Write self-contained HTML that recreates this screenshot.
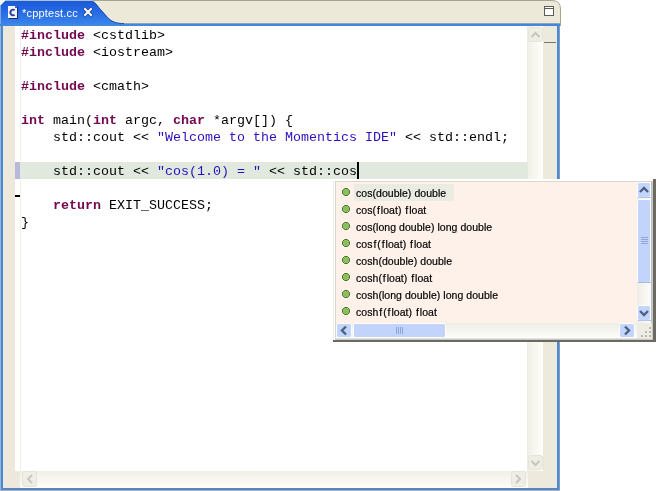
<!DOCTYPE html>
<html><head><meta charset="utf-8">
<style>
*{margin:0;padding:0;box-sizing:border-box}
html,body{width:656px;height:491px;overflow:hidden;background:#fff;position:relative;font-family:"Liberation Sans",sans-serif}
.a{position:absolute}
#code{left:21px;top:27px;will-change:transform;font-family:"Liberation Mono",monospace;font-size:13.33px;line-height:17px;white-space:pre;color:#000}
.k{color:#74084E;font-weight:bold}
.s{color:#2A10C0}
.f{margin:0 0.9px}
#tabtxt{left:22px;top:7px;will-change:transform;font-size:11px;letter-spacing:0.2px;color:#fff;white-space:pre}
.item{position:absolute;left:356px;will-change:transform;font-size:10.5px;letter-spacing:0.05px;-webkit-text-stroke:0.2px #000;line-height:17px;color:#000;white-space:pre}
</style></head><body>
<svg class="a" style="left:0;top:0" width="656" height="491" viewBox="0 0 656 491" shape-rendering="crispEdges">
<defs>
<linearGradient id="tg" x1="0" y1="0" x2="0" y2="1"><stop offset="0" stop-color="#1D5AD8"/><stop offset="0.4" stop-color="#2468E4"/><stop offset="1" stop-color="#3C88EC"/></linearGradient>
<linearGradient id="vtrack" x1="0" y1="0" x2="1" y2="0"><stop offset="0" stop-color="#F1EFE6"/><stop offset="1" stop-color="#FEFEFB"/></linearGradient>
<linearGradient id="htrack" x1="0" y1="0" x2="0" y2="1"><stop offset="0" stop-color="#F1EFE6"/><stop offset="1" stop-color="#FEFEFB"/></linearGradient>
<linearGradient id="pvtrack" x1="0" y1="0" x2="1" y2="0"><stop offset="0" stop-color="#EEEDE5"/><stop offset="1" stop-color="#FDFDFA"/></linearGradient>
<linearGradient id="phtrack" x1="0" y1="0" x2="0" y2="1"><stop offset="0" stop-color="#EEEDE5"/><stop offset="1" stop-color="#FDFDFA"/></linearGradient>
</defs>
<!-- tab bar -->
<path d="M0 1 H552 Q560 1 560 9 V26 H0 Z" fill="#ECE9D8"/>
<path d="M0 0.5 H552 Q560.5 0.5 560.5 9 V26" fill="none" stroke="#A8A492" shape-rendering="geometricPrecision"/>
<!-- frame -->
<rect x="0" y="24" width="560" height="467" fill="#5886BE"/>
<rect x="0" y="26" width="1" height="465" fill="#8FB5E2"/>
<rect x="559" y="26" width="1" height="465" fill="#7AA0D2"/>
<rect x="3" y="26" width="554" height="462" fill="#fff"/>
<rect x="0" y="490" width="560" height="1" fill="#A6B0C0"/>
<!-- tab shape -->
<path d="M0 26 V6 L5 1 H91 C94.5 1 96.5 4 99 7.5 L107.5 17 C111.5 21.5 116 23.5 124 23.5 H560 V26 Z" fill="url(#tg)" shape-rendering="geometricPrecision"/>
<path d="M91 1.5 C94.5 1.5 96.5 4.5 99 8 L107.5 17.5 C111.5 21.8 116 23.5 124 23.5" fill="none" stroke="#1D4DA8" stroke-width="1" shape-rendering="geometricPrecision"/>
<rect x="5" y="0" width="88" height="1" fill="#A9C0E8"/>
<rect x="0" y="5" width="1" height="21" fill="#7FA6E6"/>
<path d="M0 0 H5 L0 5 Z" fill="#F6F6F4"/>
<rect x="124" y="23" width="436" height="1" fill="#8FA2B4"/>
<rect x="0" y="24" width="560" height="2" fill="#4088DC"/>
<!-- maximize icon -->
<rect x="544" y="6" width="10" height="10" fill="#5E5C54"/>
<rect x="545" y="7" width="8" height="1" fill="#fff"/>
<rect x="545" y="9" width="8" height="6" fill="#fff"/>
<!-- file icon -->
<rect x="9" y="7" width="9" height="12" fill="#1A2C66"/>
<rect x="8" y="6" width="9" height="12" fill="#F2F5FC"/>
<rect x="15" y="6" width="2" height="2" fill="#5C6FA8"/>
<rect x="16" y="6" width="1" height="1" fill="#2A62DA"/>
<path d="M14.6 10.2 A2.6 2.9 0 1 0 14.6 14.8" fill="none" stroke="#2E3D9A" stroke-width="1.9" shape-rendering="geometricPrecision"/>
<!-- close X -->
<path d="M85 9 L91 15 M91 9 L85 15" stroke="#1C3D8E" stroke-width="3.2" stroke-linecap="square" shape-rendering="geometricPrecision"/>
<path d="M85 9 L91 15 M91 9 L85 15" stroke="#fff" stroke-width="2" stroke-linecap="square" shape-rendering="geometricPrecision"/>
<!-- left ruler -->
<rect x="3" y="26" width="12" height="462" fill="#EEE7DB"/>
<rect x="3" y="26" width="1" height="462" fill="#D2EEFC"/>
<!-- text area line -->
<rect x="20" y="26" width="1" height="445" fill="#EEF0E8"/>
<!-- current line -->
<rect x="20" y="162" width="508" height="17" fill="#E1E9DF"/>
<rect x="15" y="162" width="5" height="17" fill="#B8B8DC"/>
<rect x="15" y="195" width="5" height="2" fill="#000"/>
<!-- vertical scrollbar -->
<rect x="527" y="26" width="16" height="445" fill="url(#vtrack)"/>
<rect x="527" y="26" width="1" height="445" fill="#ECEBE4"/>
<rect x="527" y="162" width="1" height="17" fill="#E1E9DF"/>
<rect x="528.5" y="27.5" width="14" height="14" rx="2" fill="#EFEEE6" stroke="#E6E4D8" shape-rendering="geometricPrecision"/>
<path d="M531.5 37 L535.5 33 L539.5 37" fill="none" stroke="#C9C7BA" stroke-width="2" shape-rendering="geometricPrecision"/>
<rect x="528.5" y="455.5" width="14" height="14" rx="2" fill="#EFEEE6" stroke="#E6E4D8" shape-rendering="geometricPrecision"/>
<path d="M531.5 461 L535.5 465 L539.5 461" fill="none" stroke="#C9C7BA" stroke-width="2" shape-rendering="geometricPrecision"/>
<!-- overview ruler -->
<rect x="543" y="26" width="14" height="462" fill="#EDE9DC"/>
<rect x="544" y="42" width="12" height="1" fill="#7A7565"/>
<rect x="556" y="26" width="1" height="462" fill="#D4F0FC"/>
<!-- horizontal scrollbar -->
<rect x="20" y="471" width="508" height="17" fill="url(#htrack)"/>
<rect x="15" y="471" width="5" height="17" fill="#EDE9DC"/>
<rect x="22.5" y="471.5" width="14" height="15" rx="2" fill="#EFEEE6" stroke="#E6E4D8" shape-rendering="geometricPrecision"/>
<path d="M32 475 L28 479 L32 483" fill="none" stroke="#C9C7BA" stroke-width="2" shape-rendering="geometricPrecision"/>
<rect x="511.5" y="471.5" width="14" height="15" rx="2" fill="#EFEEE6" stroke="#E6E4D8" shape-rendering="geometricPrecision"/>
<path d="M516 475 L520 479 L516 483" fill="none" stroke="#C9C7BA" stroke-width="2" shape-rendering="geometricPrecision"/>
<rect x="528" y="471" width="15" height="17" fill="#EDE9DC"/>
<!-- cursor -->
<rect x="357" y="162" width="2" height="17" fill="#000"/>
<!-- popup -->
<rect x="333" y="179" width="323" height="161" fill="#FFFFFF"/>
<rect x="333" y="181" width="1" height="159" fill="#EEEEEA"/>
<rect x="333" y="340" width="323" height="2" fill="#6A6A62"/>
<rect x="653" y="179" width="3" height="163" fill="#6A6A62"/>
<rect x="335" y="181" width="318" height="159" fill="#DAD8CE"/>
<rect x="336" y="182" width="317" height="158" fill="#C8C8C6"/>
<rect x="336" y="182" width="316" height="157" fill="#E4E4E0"/>
<rect x="651" y="182" width="1" height="141" fill="#B8BECE"/>
<rect x="336" y="182" width="315" height="156" fill="#FDF1E9"/>
<rect x="354" y="184" width="100" height="17" fill="#EAEBE2"/>
<rect x="637" y="182" width="14" height="141" fill="url(#pvtrack)"/>
<rect x="336" y="323" width="301" height="15" fill="url(#phtrack)"/>
<rect x="637" y="323" width="14" height="15" fill="#EEEDE5"/>
<!-- popup v buttons -->
<rect x="637.5" y="182.5" width="13" height="15" rx="2" fill="#C4D5FC" stroke="#FFFFFF" shape-rendering="geometricPrecision"/>
<rect x="638" y="197" width="13" height="1" fill="#B6C4E6"/>
<path d="M640 192 L644 188 L648 192" fill="none" stroke="#4D6185" stroke-width="2.4" shape-rendering="geometricPrecision"/>
<rect x="637.5" y="199.5" width="13" height="83" rx="2" fill="#C2D3FC" stroke="#FFFFFF" shape-rendering="geometricPrecision"/>
<rect x="638" y="282" width="13" height="1" fill="#A9B9DF"/>
<rect x="641" y="237" width="7" height="1" fill="#8EA6E0"/>
<rect x="641" y="239" width="7" height="1" fill="#8EA6E0"/>
<rect x="641" y="241" width="7" height="1" fill="#8EA6E0"/>
<rect x="641" y="243" width="7" height="1" fill="#8EA6E0"/>
<rect x="637.5" y="305.5" width="13" height="15" rx="2" fill="#C4D5FC" stroke="#FFFFFF" shape-rendering="geometricPrecision"/>
<rect x="638" y="320" width="13" height="1" fill="#B6C4E6"/>
<path d="M640 311 L644 315 L648 311" fill="none" stroke="#4D6185" stroke-width="2.4" shape-rendering="geometricPrecision"/>
<!-- popup h buttons -->
<rect x="336.5" y="323.5" width="15" height="14" rx="2" fill="#C4D5FC" stroke="#FFFFFF" shape-rendering="geometricPrecision"/>
<path d="M346 326.5 L342 330.5 L346 334.5" fill="none" stroke="#4D6185" stroke-width="2.4" shape-rendering="geometricPrecision"/>
<rect x="353.5" y="323.5" width="92" height="14" rx="2" fill="#C2D3FC" stroke="#FFFFFF" shape-rendering="geometricPrecision"/>
<rect x="396" y="327" width="1" height="7" fill="#8EA6E0"/>
<rect x="398" y="327" width="1" height="7" fill="#8EA6E0"/>
<rect x="400" y="327" width="1" height="7" fill="#8EA6E0"/>
<rect x="402" y="327" width="1" height="7" fill="#8EA6E0"/>
<rect x="619.5" y="323.5" width="15" height="14" rx="2" fill="#C4D5FC" stroke="#FFFFFF" shape-rendering="geometricPrecision"/>
<path d="M625 326.5 L629 330.5 L625 334.5" fill="none" stroke="#4D6185" stroke-width="2.4" shape-rendering="geometricPrecision"/>
<!-- grip -->
<g fill="#BDBAAA"><rect x="649" y="327" width="2" height="2"/><rect x="645" y="331" width="2" height="2"/><rect x="649" y="331" width="2" height="2"/><rect x="641" y="335" width="2" height="2"/><rect x="645" y="335" width="2" height="2"/><rect x="649" y="335" width="2" height="2"/></g>
<!-- bullets -->
<g id="bul"><path d="M344.5 188.5 H347.5 L349.5 190.5 V193.5 L347.5 195.5 H344.5 L342.5 193.5 V190.5 Z" fill="#8DBE5E" stroke="#4A7634" shape-rendering="geometricPrecision"/></g>
<use href="#bul" y="17"/><use href="#bul" y="34"/><use href="#bul" y="51"/><use href="#bul" y="68"/><use href="#bul" y="85"/><use href="#bul" y="102"/><use href="#bul" y="119"/>
</svg>
<div class="a" id="tabtxt">*cpptest.cc</div>
<div class="a" id="code"><span class="k">#include</span> &lt;cstdlib&gt;
<span class="k">#include</span> &lt;iostream&gt;

<span class="k">#include</span> &lt;cmath&gt;

<span class="k">int</span> main(<span class="k">int</span> argc, <span class="k">char</span> *argv[]) {
    std::cout &lt;&lt; <span class="s">"Welcome to the Momentics IDE"</span> &lt;&lt; std::endl;

    std::cout &lt;&lt; <span class="s">"cos(1.0) = "</span> &lt;&lt; std::cos

    <span class="k">return</span> EXIT_SUCCESS;
}</div>
<div class="item" style="top:185px">cos(double) double</div>
<div class="item" style="top:202px">cos(<span class="f">f</span>loat) <span class="f">f</span>loat</div>
<div class="item" style="top:219px">cos(long double) long double</div>
<div class="item" style="top:236px">cos<span class="f">f</span>(<span class="f">f</span>loat) <span class="f">f</span>loat</div>
<div class="item" style="top:253px">cosh(double) double</div>
<div class="item" style="top:270px">cosh(<span class="f">f</span>loat) <span class="f">f</span>loat</div>
<div class="item" style="top:287px">cosh(long double) long double</div>
<div class="item" style="top:304px">cosh<span class="f">f</span>(<span class="f">f</span>loat) <span class="f">f</span>loat</div>
</body></html>
